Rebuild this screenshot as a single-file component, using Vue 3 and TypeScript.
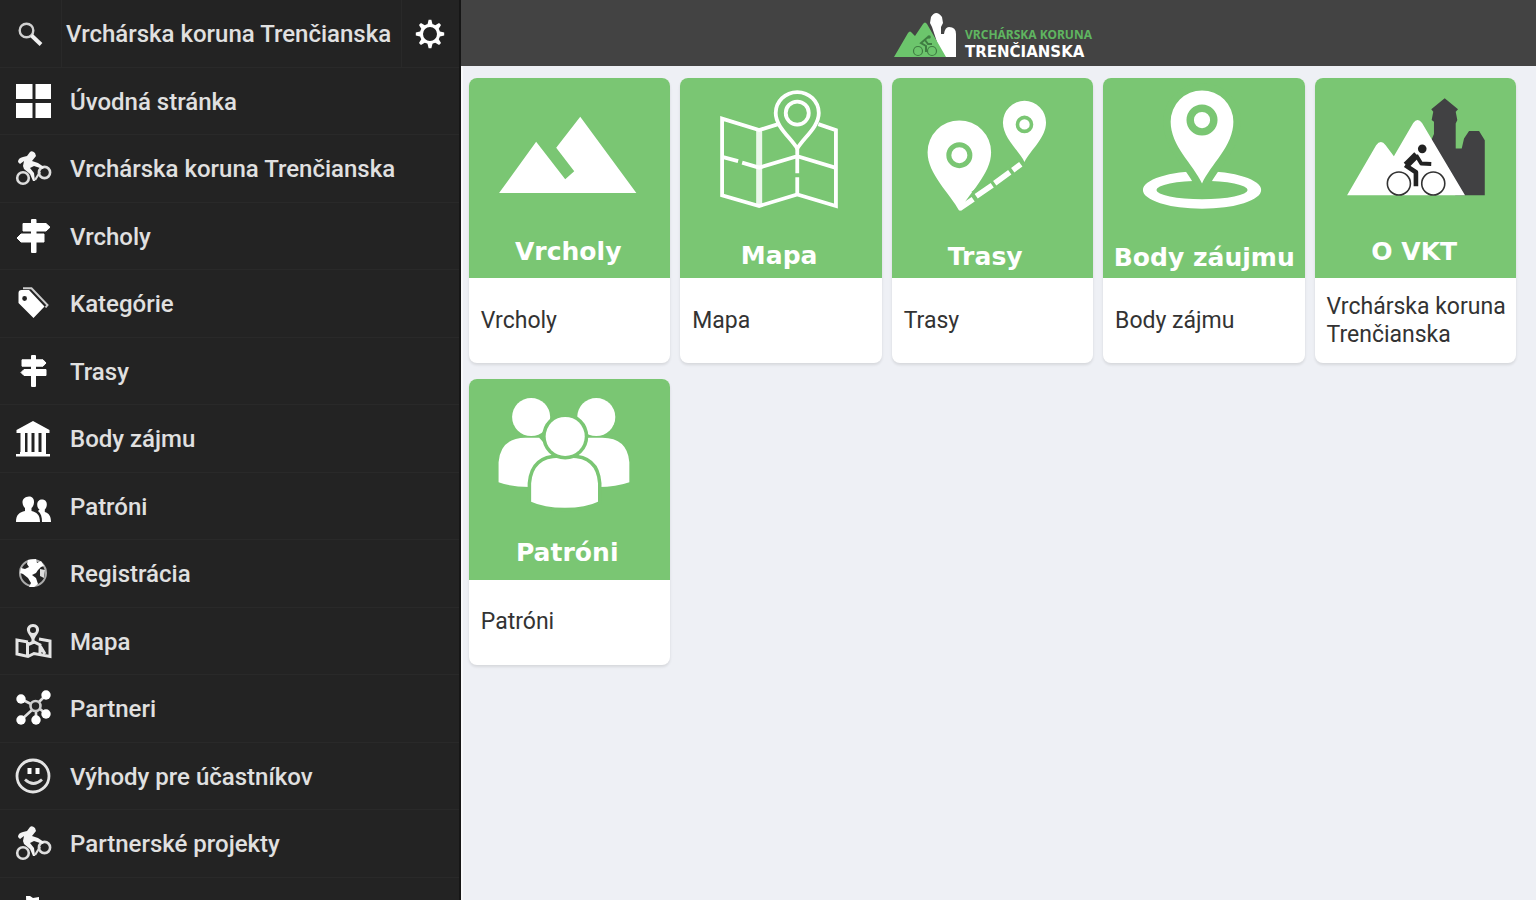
<script setup lang="ts">
type IconName =
  | 'grid' | 'bike' | 'signpost' | 'tag' | 'signs' | 'museum'
  | 'people' | 'globe' | 'map' | 'network' | 'smile' | 'flag'

interface MenuItem {
  icon: IconName
  label: string
}

interface Tile {
  art: 'peaks' | 'map' | 'route' | 'place' | 'castle' | 'patrons'
  heading: string
  caption: string
  x: number
  y: number
}

const menu: MenuItem[] = [
  { icon: 'grid', label: 'Úvodná stránka' },
  { icon: 'bike', label: 'Vrchárska koruna Trenčianska' },
  { icon: 'signpost', label: 'Vrcholy' },
  { icon: 'tag', label: 'Kategórie' },
  { icon: 'signs', label: 'Trasy' },
  { icon: 'museum', label: 'Body zájmu' },
  { icon: 'people', label: 'Patróni' },
  { icon: 'globe', label: 'Registrácia' },
  { icon: 'map', label: 'Mapa' },
  { icon: 'network', label: 'Partneri' },
  { icon: 'smile', label: 'Výhody pre účastníkov' },
  { icon: 'bike', label: 'Partnerské projekty' },
  { icon: 'flag', label: '' },
]

const tiles: Tile[] = [
  { art: 'peaks', heading: 'Vrcholy', caption: 'Vrcholy', x: 99, y: 182 },
  { art: 'map', heading: 'Mapa', caption: 'Mapa', x: 99, y: 186 },
  { art: 'route', heading: 'Trasy', caption: 'Trasy', x: 93, y: 187 },
  { art: 'place', heading: 'Body záujmu', caption: 'Body zájmu', x: 101, y: 188 },
  { art: 'castle', heading: 'O VKT', caption: 'Vrchárska koruna Trenčianska', x: 99, y: 182 },
  { art: 'patrons', heading: 'Patróni', caption: 'Patróni', x: 98, y: 182 },
]
</script>

<template>
  <div class="app">
    <aside class="sidebar">
      <header class="bar">
        <button class="tool search" type="button" aria-label="Hľadať">
          <svg width="28" height="28" viewBox="0 0 28 28" aria-hidden="true">
            <circle cx="9.500" cy="10.500" r="6.800" fill="none" stroke="#d0d0d0" stroke-width="2.400" />
            <path d="M14.500 15.500L24 24.500" stroke="#f0f0f0" stroke-width="4" />
          </svg>
        </button>
        <h1 class="title">Vrchárska koruna Trenčianska</h1>
        <button class="tool gear" type="button" aria-label="Nastavenia">
          <svg width="30" height="30" viewBox="0 0 30 30" aria-hidden="true">
            <circle cx="15" cy="15" r="8.600" fill="none" stroke="#fff" stroke-width="3.200" />
            <g fill="#fff">
              <path
                v-for="n in 8"
                :key="n"
                d="M12.300 6L13.600 .8h2.800L17.700 6z"
                :transform="`rotate(${n * 45} 15 15)`"
              />
            </g>
          </svg>
        </button>
      </header>

      <nav class="menu">
        <a v-for="(item, i) in menu" :key="i" class="item" href="#">
          <svg class="icon" viewBox="0 0 36 36" aria-hidden="true">
            <path v-if="item.icon === 'grid'" fill="#fff" d="M1 1h16.500v15H1zM20.500 1H36v15H20.500zM1 20h16.500v15H1zM20.500 20H36v15H20.500z" />
            <g v-else-if="item.icon === 'bike'">
              <g fill="none" stroke="#ddd" stroke-width="2.600">
                <circle cx="8" cy="28" r="5.800" />
                <circle cx="29.500" cy="22.500" r="5.600" />
              </g>
              <path fill="#f4f4f4" d="M3 12q0-4 5-5l4-1 3-4q2-2 5 1l1 3-4 5 6 2 6 4-1 2-9-3-4 2 4 5 1 8h-2l-3-7-6-5-1-3 1-5-4 3z" />
              <path fill="none" stroke="#ddd" stroke-width="2.200" d="M20 30l5-8" />
            </g>
            <g v-else-if="item.icon === 'signpost'" fill="#fff">
              <rect x="16" y="1" width="5.500" height="34" rx="1" />
              <path d="M8 5.500h23l4 3.700-4 3.800H8zM6 16h23v8H6l-4-4z" stroke="#fff" stroke-linejoin="round" />
            </g>
            <g v-else-if="item.icon === 'tag'">
              <path fill="#fff" fill-rule="evenodd" d="M3.500 8q0-3 3-3H14l15.500 16.500L18.500 33 3.500 18zM12 13.500a2.400 2.400 0 1 0-4.800 0 2.400 2.400 0 0 0 4.800 0z" />
              <path fill="none" stroke="#ccc" stroke-width="2" d="M8 3.300h8.500L32.500 20l-2 2.500" />
            </g>
            <g v-else-if="item.icon === 'signs'" fill="#fff">
              <rect x="16" y="2" width="5" height="32" rx="1" />
              <path d="M7 6.800h21l3 3.200-3 3.200H7zM9 16.500h22v6H9l-3-3z" stroke="#fff" stroke-linejoin="round" />
            </g>
            <g v-else-if="item.icon === 'museum'" fill="#fff">
              <path d="M18 1l16.500 9v3h-33v-3zM5 32h26v2h4v2.500H1V34h4z" />
              <path d="M5.500 13h4.500v19H5.500zM12.500 13h4v19h-4zM19.500 13h4v19h-4zM26.500 13h4.500v19h-4.500z" />
            </g>
            <g v-else-if="item.icon === 'people'" fill="#fff">
              <path d="M14 8.500c4 0 5.200 3 5 6-.2 3-1.500 4.500-2.500 5.500v3c5 1.200 8.500 3.500 8.500 11H1c0-7.500 3.500-9.800 9-11v-3c-1-1-2.300-2.500-2.500-5.500-.2-3 2.500-6 6.500-6z" />
              <path d="M27 11.500c3.500 0 5 2.500 4.800 5.500-.2 2.500-1 3.500-2 4.500v2.500c4 1 6.200 4 6.200 10h-9c0-5-1-8.500-4-11l1.500-1.500c-1.500-1-2.300-2.500-2.300-5 0-3 2-5 4.800-5z" />
            </g>
            <g v-else-if="item.icon === 'globe'">
              <circle cx="18" cy="18" r="13" fill="none" stroke="#aaa" stroke-width="2" />
              <path fill="#fff" d="M13 5l8-1 1 4 4-2 3 5-3 1-3 3-2 3-4 2 4 3 2 6-4 3h-5l2-4-3-5-5-4-3-1 1-5 4 1 4-2-2-3z" />
              <path fill="#ddd" d="M25 14l5 1-1 8-4-2z" />
            </g>
            <g v-else-if="item.icon === 'map'" fill="none" stroke="#e4e4e4" stroke-width="3">
              <path fill="#e4e4e4" stroke="none" fill-rule="evenodd" d="M18 1c4 0 6.500 3 6 6.500-.4 3-3 5-4.500 8.500v5h-3v-5C15 12.500 12.400 10.500 12 7.500 11.500 4 14 1 18 1zM18 4a3 3 0 1 0 0 6 3 3 0 0 0 0-6z" />
              <path d="M13 19L2 17v14l11 2.500 6-3 16 3V18l-11-2M12.500 19v14M12 22l7-3 6 3v10M24 21l6 10" />
            </g>
            <g v-else-if="item.icon === 'network'">
              <path fill="none" stroke="#ddd" stroke-width="2.600" d="M6 9l10 5M31 5l-7 7M31 24l-6-5M21 30v-9M6 30l11-10" />
              <circle cx="20.500" cy="16" r="5" fill="none" stroke="#ccc" stroke-width="2.600" />
              <g fill="#fff">
                <circle cx="6" cy="9" r="4.700" /><circle cx="31" cy="5" r="4.700" />
                <circle cx="31" cy="24" r="4.700" /><circle cx="21" cy="30" r="4.700" />
                <circle cx="6" cy="30" r="4.700" />
              </g>
            </g>
            <g v-else-if="item.icon === 'smile'">
              <circle cx="18" cy="18" r="16" fill="none" stroke="#e4e4e4" stroke-width="2.800" />
              <path fill="#fff" d="M12.500 10h4v6h-4zM20.500 10h4v6h-4z" />
              <path fill="none" stroke="#ddd" stroke-width="2.800" d="M10 21.500q8.500 8 17 0" />
            </g>
            <path v-else fill="#fff" d="M11 3l4 0 3 2 6-1v12l-6 1-3-1v16h-3z" />
          </svg>
          <span>{{ item.label }}</span>
        </a>
      </nav>
    </aside>

    <div class="page">
      <header class="topbar">
        <svg class="logo" width="204" height="66" viewBox="0 0 204 66" role="img" aria-label="Vrchárska koruna Trenčianska">
          <path fill="#fff" d="M40 27l-2-4 1-6q5-8 11 0l1 6-2 4v7h3q1-7 5-7 7 0 7 7v23H50z" />
          <path fill="#6cc56c" d="M2 57L16 33q2-3 4 0l3 3 8-12q2-3 4 0l19 33z" />
          <g fill="none" stroke="#3f7d42" stroke-width="1.200">
            <circle cx="26" cy="51" r="4.500" />
            <circle cx="40" cy="51" r="4.500" />
            <path d="M36 37l-7 6 5 3v6M33 40l3 4h4" stroke-width="2" />
          </g>
          <circle cx="37" cy="37" r="1.800" fill="#3f7d42" />
          <text class="logo-top" x="73" y="39">VRCHÁRSKA KORUNA</text>
          <text class="logo-bottom" x="73" y="57">TRENČIANSKA</text>
        </svg>
      </header>

      <main class="tiles">
        <a v-for="tile in tiles" :key="tile.heading" class="card" href="#">
          <svg class="art" viewBox="0 0 201 200" aria-hidden="true">
            <path v-if="tile.art === 'peaks'" fill="#fff" d="M30 114.700L67 63.700 96 101l9-8-18-23.300 24-31 56 76z" />

            <g v-else-if="tile.art === 'map'" fill="none" stroke="#fff" stroke-width="3.800">
              <path d="M98 46L79 52 42 40.500V117l37 10.700 38-11.400 38.600 11.400V52L138 46" />
              <path d="M42 78.700L58 83M62 84.500l17 5L117 78l38.600 11.700M117 70v25M117 99v17" />
              <path d="M79 52v75" stroke-width="6" stroke-opacity=".85" />
              <path d="M117 70.500C111 60 95.500 49 95.500 35a21.500 21 0 0 1 43 0C138.500 49 123 60 117 70.500z" />
              <circle cx="117" cy="35" r="11.500" />
            </g>

            <g v-else-if="tile.art === 'route'">
              <path d="M67.200 132.700C58 115 35.500 96 35.500 74a31.700 31.700 0 0 1 63.400 0c0 22-22.500 41-31.700 58.700z" fill="#fff" />
              <path d="M81 116L129 83" stroke="#7ac673" stroke-width="6" />
              <path d="M67 130.500l14-9.500M84 118l16-11M102.500 105l15-11M120.500 92l8-6" stroke="#fff" stroke-width="5.500" />
              <path d="M132.200 83.700c-6-12-21.500-24-21.500-39.400a21.500 21.500 0 0 1 43 0c0 15.400-15.500 27.400-21.500 39.400z" fill="#fff" />
              <circle cx="67.200" cy="77" r="10.500" fill="none" stroke="#7ac673" stroke-width="5" />
              <circle cx="132.200" cy="46.300" r="7" fill="none" stroke="#7ac673" stroke-width="3.600" />
            </g>

            <g v-else-if="tile.art === 'place'">
              <path fill="#fff" fill-rule="evenodd" d="M39.800 111.700a59 18.700 0 1 0 118 0 59 18.700 0 1 0-118 0zM53.300 111.700a45.500 9.200 0 1 0 91 0 45.500 9.200 0 1 0-91 0z" />
              <path
                class="cutout"
                d="M98.800 105.300C90 86 67.500 68 67.500 43.700a31.300 31.300 0 0 1 62.600 0c0 24.300-22.500 42.300-31.300 61.600z"
              />
              <circle cx="98.800" cy="42" r="11.800" fill="none" stroke="#7ac673" stroke-width="7.400" />
            </g>

            <g v-else-if="tile.art === 'castle'">
              <path fill="#414143" d="M116 62l2.700-6V43.700L116.400 42l1.600-8.300-2-2.400 13.400-11 13.300 11-2.300 2.400L142 42l-1.600 3.300v25h6l2.300-10 5-7.300h10l5.700 9v55H140z" />
              <path fill="#fff" d="M32 117L61 67q4.700-6.500 9.500 0l8.200 11L98 45q4.400-6 8.800 0l42.900 72z" />
              <g fill="#fff" stroke="#333" stroke-width="1.600">
                <circle cx="83.700" cy="105.300" r="11.500" />
                <circle cx="118" cy="105.300" r="11.500" />
              </g>
              <circle cx="107" cy="70.700" r="4.300" fill="#222" />
              <g fill="none" stroke="#222">
                <path d="M101.500 76.500L91 87" stroke-width="7" />
                <path d="M90 87l10.700 7v14" stroke-width="4.600" stroke-linejoin="round" />
                <path d="M101 77l5 8.300 10 .5" stroke-width="3.800" stroke-linejoin="round" />
              </g>
            </g>

            <g v-else fill="#fff">
              <circle cx="62" cy="38" r="19" />
              <circle cx="127" cy="38" r="19" />
              <path d="M29.500 103V83q2-24.300 27-24.300H70L90 80v27.700H60q-18 0-30.500-4.700zM160 103V83q-2-24.300-27-24.300h-14L100 80v27.700h29q18 0 31-4.700z" />
              <g stroke="#7ac673" stroke-width="7" class="front">
                <path d="M62 122.500V104q2-25.500 28-25.500h11q26 0 27.700 25.500v18.500q-12 6-33 6t-33.700-6z" />
                <circle cx="96" cy="57.300" r="19.500" />
              </g>
            </g>

            <text class="heading" :x="tile.x" :y="tile.y">{{ tile.heading }}</text>
          </svg>
          <span class="caption">{{ tile.caption }}</span>
        </a>
      </main>
    </div>
  </div>
</template>

<style>
body {
  margin: 0;
  background: #eef0f5;
}
</style>

<style scoped>
.app {
  display: flex;
  height: 100vh;
  overflow: hidden;
  font-family: Roboto, "Noto Sans", sans-serif;
}

.sidebar {
  flex: 0 0 30%;
  box-sizing: border-box;
  overflow: hidden;
  background: #232323;
  border-right: 2px solid #161616;
  color: #e0e0e0;
}

.bar,
.item {
  display: flex;
  align-items: center;
  box-sizing: border-box;
  height: 7.5vh;
  min-height: 48px;
  border-bottom: 1px solid #292929;
}

.tool {
  display: flex;
  align-items: center;
  align-self: stretch;
  justify-content: center;
  flex: none;
  width: 62px;
  padding: 2px 0 0;
  border: 0;
  background: none;
  cursor: pointer;
}

.search {
  border-right: 1px solid #292929;
}

.gear {
  width: 58px;
  border-left: 1px solid #292929;
}

.title {
  flex: 1;
  margin: 0;
  padding: 2px 0 0 4px;
  font-size: 24px;
  font-weight: 500;
  line-height: 32px;
  white-space: nowrap;
}

.item {
  gap: 19px;
  padding-left: 15px;
  color: inherit;
  font-size: 24px;
  font-weight: 500;
  line-height: 32px;
  text-decoration: none;
  white-space: nowrap;
}

.item span {
  padding-top: 2px;
}

.icon {
  flex: none;
  width: 36px;
  height: 36px;
  overflow: visible;
}

.page {
  display: flex;
  flex: 1;
  flex-direction: column;
  min-width: 0;
  overflow: auto;
}

.topbar {
  display: flex;
  flex: none;
  justify-content: center;
  height: 66px;
  padding-right: 8px;
  background: #434343;
}

.logo-top {
  fill: #5fb560;
  font: bold 12px "Noto Sans", sans-serif;
}

.logo-bottom {
  fill: #fff;
  font: bold 15px "DejaVu Sans", sans-serif;
}

.tiles {
  display: grid;
  flex: 1;
  grid-template-columns: repeat(5, 1fr);
  align-content: start;
  gap: 16px 10px;
  padding: 12px 20px 12px 6px;
  border-left: 2px solid #f7f8fa;
}

.card {
  display: flex;
  flex-direction: column;
  overflow: hidden;
  border-radius: 8px;
  background: #fff;
  box-shadow: 0 2px 3px rgba(0, 0, 0, 0.1);
  color: #333;
  text-decoration: none;
}

.art {
  display: block;
  width: 100%;
  background: #7ac673;
}

.cutout {
  fill: #fff;
  stroke: #7ac673;
  stroke-width: 15px;
  stroke-linejoin: round;
  paint-order: stroke;
}

.front {
  paint-order: stroke;
}

.heading {
  fill: #fff;
  font: bold 25px "DejaVu Sans", sans-serif;
  text-anchor: middle;
}

.caption {
  display: flex;
  align-items: center;
  flex: 1;
  min-height: 85px;
  padding: 0 8px 0 12px;
  font-size: 23px;
  line-height: 28px;
}
</style>
